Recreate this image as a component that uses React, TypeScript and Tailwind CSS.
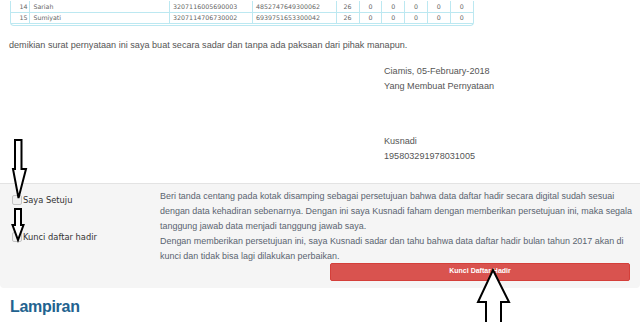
const rows = [
  { no: 14, name: 'Sariah', nik: '3207116005690003', npwp: '4852747649300062', days: 26 },
  { no: 15, name: 'Sumiyati', nik: '3207114706730002', npwp: '6939751653300042', days: 26 },
]

const zeroCols = [0, 1, 2, 3, 4]

function Arrow({ points }: { points: string }) {
  return <polygon points={points} fill="white" stroke="black" strokeWidth="2" strokeLinejoin="miter" />
}

export default function App() {
  return (
    <div className="relative h-[322px] w-[640px] overflow-hidden bg-white font-['Liberation_Sans',Arial,sans-serif] text-[#555]">
      {/* attendance table tail */}
      <div className="mx-[10px] mt-[1px] w-[464px] rounded-b-[4px] border border-t-0 border-[#bce8f1] pb-[1px]">
        <table className="w-full border-collapse font-['DejaVu_Sans',Verdana,sans-serif] text-[6.3px] text-[#666]">
          <tbody>
            {rows.map((r) => (
              <tr key={r.no} className="h-[11px] border-b border-[#bce8f1]">
                <td className="w-[19px] border-r border-[#bce8f1] pr-[2px] text-right">{r.no}</td>
                <td className="w-[141px] border-r border-[#bce8f1] pl-[3px]">{r.name}</td>
                <td className="w-[83px] border-r border-[#bce8f1] pl-[3px]">{r.nik}</td>
                <td className="w-[84px] border-r border-[#bce8f1] pl-[3px]">{r.npwp}</td>
                <td className="w-[23px] border-r border-[#bce8f1] text-center">{r.days}</td>
                {zeroCols.map((c) => (
                  <td key={c} className="w-[23px] border-r border-[#bce8f1] text-center last:border-r-0">
                    0
                  </td>
                ))}
              </tr>
            ))}
          </tbody>
        </table>
      </div>

      <p className="mt-[12px] pl-[9px] text-[9.1px] leading-[15px]">
        demikian surat pernyataan ini saya buat secara sadar dan tanpa ada paksaan dari pihak manapun.
      </p>

      <div className="ml-[384px] mt-[11px] text-[9.1px] leading-[15px]">
        <p>Ciamis, 05-February-2018</p>
        <p>Yang Membuat Pernyataan</p>
        <p className="mt-[40px]">Kusnadi</p>
        <p>195803291978031005</p>
      </div>

      {/* agreement well */}
      <div className="mt-[19px] rounded-b-[4px] border-t border-[#e3e3e3] bg-[#f5f5f5] pb-[7px] pt-[5px]">
        <div className="grid grid-cols-[160px_1fr]">
          <div className="flex flex-col gap-[25px] pl-[12px] pt-[5px] font-['DejaVu_Sans',Verdana,sans-serif] text-[8.3px] text-[#333]">
            <label className="flex items-center">
              <span className="h-[10px] w-[10px] rounded-[2px] border border-[#c4c4c4] bg-[#f0f0f0]" />
              <span className="pl-[1px]">Saya Setuju</span>
            </label>
            <label className="flex items-center">
              <span className="h-[10px] w-[10px] rounded-[2px] border border-[#c4c4c4] bg-[#f0f0f0]" />
              <span className="pl-[1px]">Kunci daftar hadir</span>
            </label>
          </div>
          <div className="whitespace-nowrap pr-[8px] text-[8.95px] leading-[15px] text-[#5a6470]">
            <p>
              Beri tanda centang pada kotak disamping sebagai persetujuan bahwa data daftar hadir secara digital sudah sesuai
              <br />
              dengan data kehadiran sebenarnya. Dengan ini saya Kusnadi faham dengan memberikan persetujuan ini, maka segala
              <br />
              tanggung jawab data menjadi tanggung jawab saya.
            </p>
            <p>
              Dengan memberikan persetujuan ini, saya Kusnadi sadar dan tahu bahwa data daftar hadir bulan tahun 2017 akan di
              <br />
              kunci dan tidak bisa lagi dilakukan perbaikan.
            </p>
          </div>
        </div>
        <div className="ml-[330px] -mt-[1px] w-[300px]">
          <button
            type="button"
            className="flex h-[18px] w-full items-center justify-center rounded-[2px] border border-[#d43f3a] bg-[#d9534f] text-[7px] font-bold text-white"
          >
            Kunci Daftar Hadir
          </button>
        </div>
      </div>

      <h2 className="mt-[9px] pl-[10px] text-[16px] font-bold leading-[20px] tracking-[-0.3px] text-[#22628f]">
        Lampiran
      </h2>
      <p className="mt-[5px] pl-[10px] text-[7px] text-[#777]">
        Alamat : Desa Cibeureum Rt 01 Rw 03 Kec. Ciamis Kab. Ciamis Kode Pos 46211
      </p>

      {/* hand-drawn pointer arrows */}
      <svg className="pointer-events-none absolute left-0 top-0" width="640" height="322" viewBox="0 0 640 322">
        <Arrow points="15,140 21.5,140 21.5,169 26,169 18.5,198 13,169 15,169" />
        <Arrow points="15,209 21,209 21,225 23.5,225 18,240 12.5,225 15,225" />
        <Arrow points="486,340 486,302 478,302 493,270 509,302 501,302 501,340" />
      </svg>
    </div>
  )
}
